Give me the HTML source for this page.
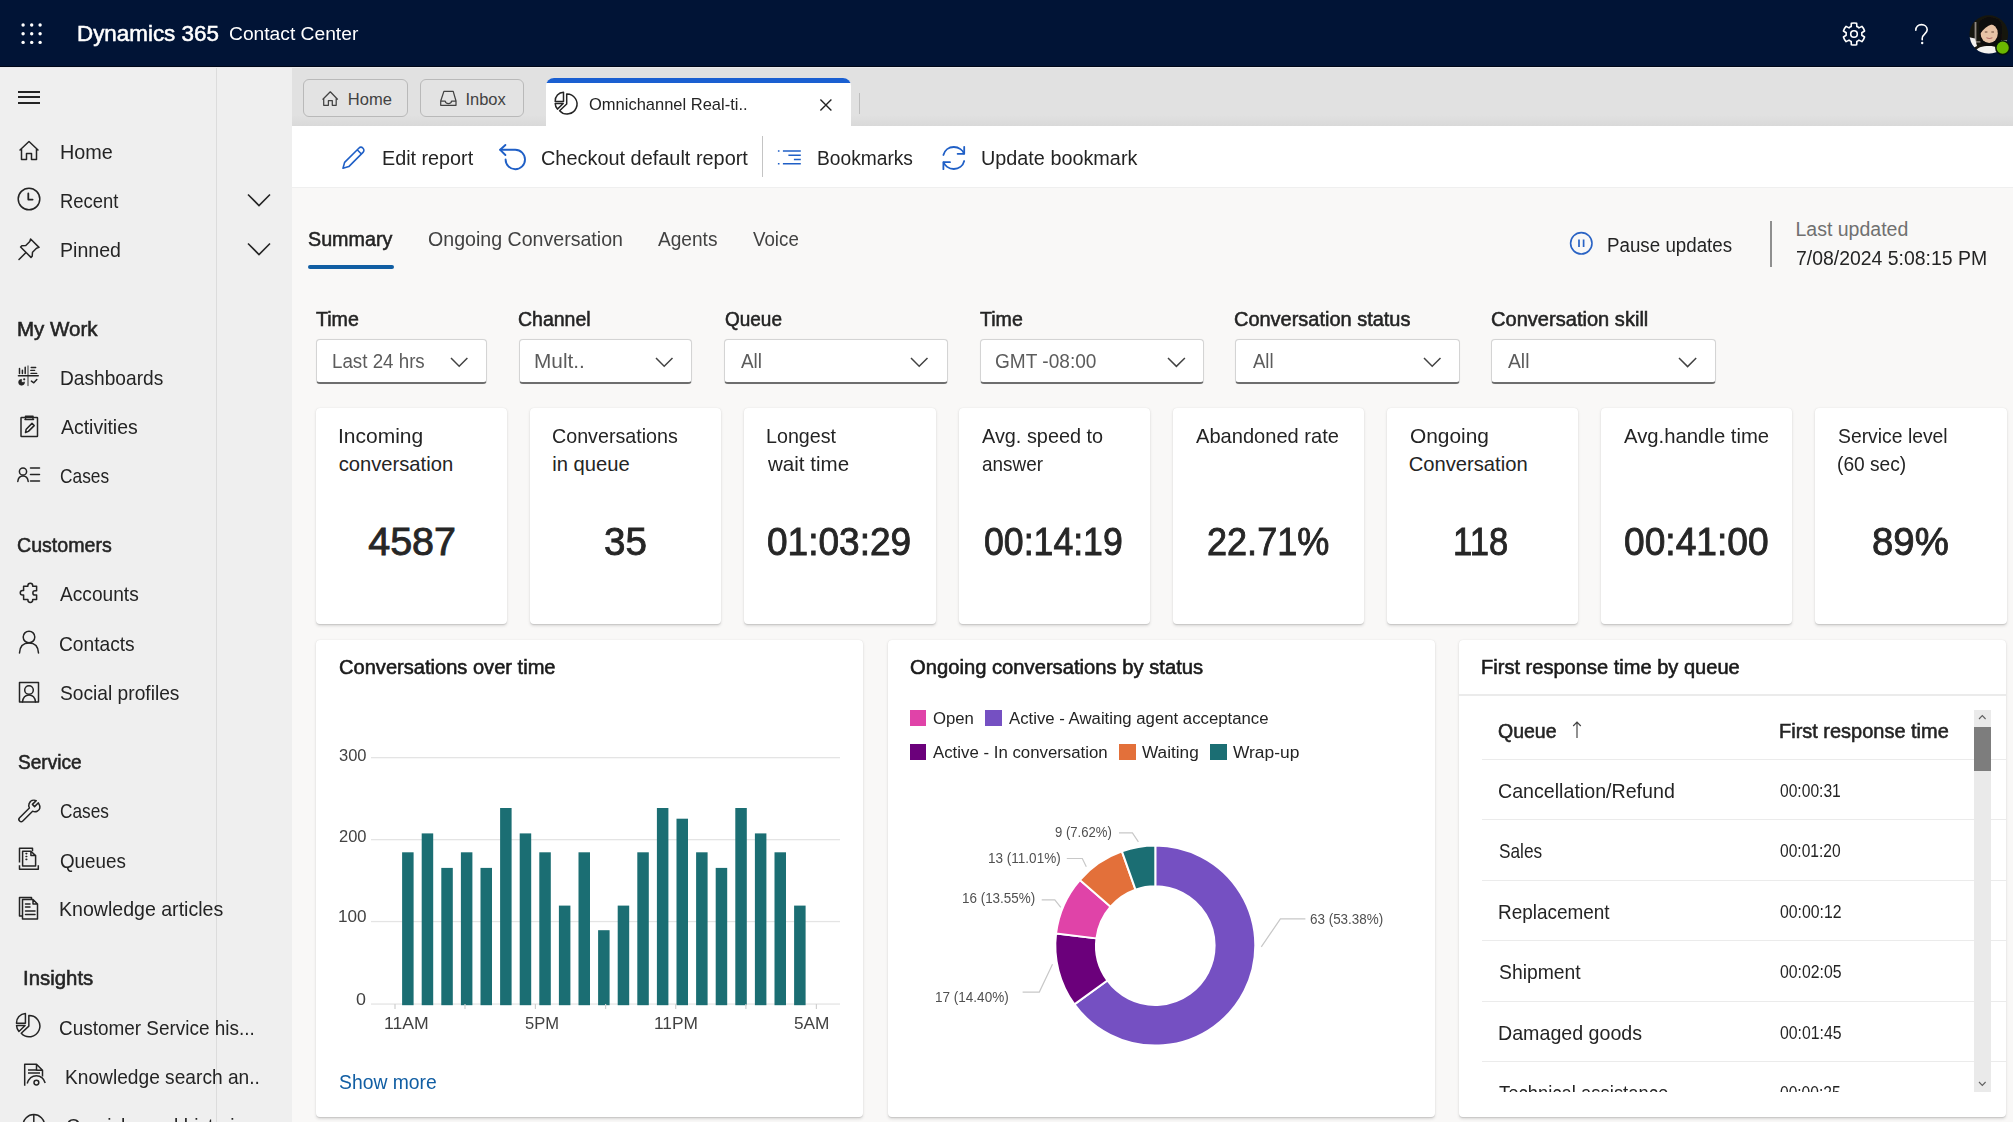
<!DOCTYPE html>
<html><head><meta charset="utf-8"><title>Omnichannel Real-time Analytics</title>
<style>
html,body{margin:0;padding:0;}
body{width:2013px;height:1122px;overflow:hidden;position:relative;background:#f9f8f7;font-family:"Liberation Sans",sans-serif;}
.t{position:absolute;white-space:nowrap;transform-origin:0 0;}
.a{position:absolute;}
svg.a{overflow:visible;}
</style></head><body>
<div class="a" style="left:0;top:0;width:2013px;height:67px;background:#011436"></div>
<div class="a" style="left:0;top:65.6px;width:2013px;height:1.4px;background:#000718"></div>
<div class="a" style="left:0;top:67px;width:292px;height:1055px;background:#efefef"></div>
<div class="a" style="left:216px;top:67px;width:1px;height:1055px;background:#dcdcdc"></div>
<div class="a" style="left:292px;top:67px;width:1721px;height:59px;background:linear-gradient(to bottom,#e1e1e1 0,#e1e1e1 48px,#d9d9d9 59px)"></div>
<div class="a" style="left:292px;top:126px;width:1721px;height:61px;background:#fff"></div>
<div class="a" style="left:292px;top:187px;width:1721px;height:1px;background:#efefef"></div>
<div class="a" style="left:0;top:67px;width:2013px;height:1px;background:#ebebed"></div>
<svg class="a" style="left:0;top:0" width="60" height="67"><circle cx="23.1" cy="25" r="1.7" fill="#fff"/><circle cx="23.1" cy="33.7" r="1.7" fill="#fff"/><circle cx="23.1" cy="42.4" r="1.7" fill="#fff"/><circle cx="31.7" cy="25" r="1.7" fill="#fff"/><circle cx="31.7" cy="33.7" r="1.7" fill="#fff"/><circle cx="31.7" cy="42.4" r="1.7" fill="#fff"/><circle cx="40.1" cy="25" r="1.7" fill="#fff"/><circle cx="40.1" cy="33.7" r="1.7" fill="#fff"/><circle cx="40.1" cy="42.4" r="1.7" fill="#fff"/></svg>
<div class="t" style="left:76.80px;top:22.75px;font-size:22.5px;line-height:22.5px;font-weight:400;color:#fff;-webkit-text-stroke:0.55px #fff;transform:scaleX(0.9954);">Dynamics 365</div>
<div class="t" style="left:228.50px;top:24.96px;font-size:18px;line-height:18px;font-weight:400;color:#fff;transform:scaleX(1.0680);">Contact Center</div>
<svg class="a" style="left:1837.6px;top:17.6px" width="32" height="32" viewBox="0 0 32 32"><path d="M13.17,8.62 L13.34,5.33 A11.0,11.0 0 0 1 18.66,5.33 L18.83,8.62 A7.9,7.9 0 0 1 20.97,9.86 L23.91,8.36 A11.0,11.0 0 0 1 26.57,12.97 L23.80,14.76 A7.9,7.9 0 0 1 23.80,17.24 L26.57,19.03 A11.0,11.0 0 0 1 23.91,23.64 L20.97,22.14 A7.9,7.9 0 0 1 18.83,23.38 L18.66,26.67 A11.0,11.0 0 0 1 13.34,26.67 L13.17,23.38 A7.9,7.9 0 0 1 11.03,22.14 L8.09,23.64 A11.0,11.0 0 0 1 5.43,19.03 L8.20,17.24 A7.9,7.9 0 0 1 8.20,14.76 L5.43,12.97 A11.0,11.0 0 0 1 8.09,8.36 L11.03,9.86 A7.9,7.9 0 0 1 13.17,8.62 Z" fill="none" stroke="#fff" stroke-width="1.6" stroke-linejoin="round"/><circle cx="16" cy="16" r="3.3" fill="none" stroke="#fff" stroke-width="1.6"/></svg>
<svg class="a" style="left:1908px;top:20px" width="28" height="28" viewBox="0 0 28 28">
<path d="M7.8 10.2 C7.8 6.6 10.4 4.6 13.5 4.6 C16.6 4.6 19.2 6.6 19.2 9.8 C19.2 13.6 14.2 14.2 14.2 18.4 L14.2 19.8" fill="none" stroke="#fff" stroke-width="1.6" stroke-linecap="round"/>
<circle cx="14.2" cy="23" r="1.2" fill="#fff"/></svg>
<svg class="a" style="left:1966px;top:13px" width="47" height="47" viewBox="0 0 47 47">
<defs><clipPath id="av"><circle cx="22.8" cy="21.5" r="19.3"/></clipPath>
<filter id="avb" x="-10%" y="-10%" width="120%" height="120%"><feGaussianBlur stdDeviation="0.55"/></filter></defs>
<g clip-path="url(#av)"><g filter="url(#avb)">
<rect x="0" y="0" width="47" height="47" fill="#161311"/>
<rect x="8.6" y="9" width="1.8" height="21" fill="#8f897f"/>
<rect x="8" y="28.3" width="8" height="1.2" fill="#9a948a"/>
<path d="M2 24 L9 25.5 L11 33 L5 36 Z" fill="#f2f0ee"/>
<path d="M33 27.5 C37 26.5 41 27 44 29 L44 33 L34 31 Z" fill="#e9e7e4"/>
<path d="M13 14 C13 7 18 4.6 24 4.6 C31 4.6 35.6 8 35.6 15 L35 30 C32 32 28 33 24 33 C19 33 16 32 14.5 30 Z" fill="#0c0a09"/>
<ellipse cx="23.2" cy="20.4" rx="8.6" ry="9.6" fill="#e7c3a6"/>
<path d="M14 21 C14 12 18 8 23.5 8 C28.5 8 32 11 32.5 16 C31 13 28 11.5 25.5 11.5 C21.5 12.5 17.5 16 14 21 Z" fill="#0c0a09"/>
<path d="M18.8 19 h2.6 M25.4 19 h2.6" stroke="#6a4a3a" stroke-width="1"/>
<path d="M20.4 24.6 Q23.4 26.4 26.4 24.6" stroke="#b7706a" stroke-width="1.1" fill="none"/>
<path d="M8 40 C11 34 16 33 23 33 C30 33 34 35 37 40 L37 47 L8 47 Z" fill="#f4f2ef"/>
<path d="M9 41.5 L36 41.5" stroke="#565c78" stroke-width="1.6"/>
</g></g>
<circle cx="36.7" cy="34.7" r="7.6" fill="#06140a"/>
<circle cx="36.7" cy="34.7" r="6.1" fill="#6bb700"/>
</svg>
<div class="a" style="left:18px;top:90.6px;width:22px;height:2px;background:#242424"></div>
<div class="a" style="left:18px;top:96.2px;width:22px;height:2px;background:#242424"></div>
<div class="a" style="left:18px;top:102px;width:22px;height:2px;background:#242424"></div>
<svg class="a" style="left:16px;top:138px" width="26" height="26" viewBox="0 0 26 26" fill="none" stroke="#242424" stroke-width="1.5" stroke-linejoin="round" stroke-linecap="round"><path d="M4 12 L13 3.5 L22 12 M5.5 10.8 V21.5 H10.5 V15.5 H15.5 V21.5 H20.5 V10.8"/></svg>
<div class="t" style="left:59.62px;top:142.02px;font-size:20.3px;line-height:20.3px;font-weight:400;color:#242424;transform:scaleX(0.9769);">Home</div>
<svg class="a" style="left:16px;top:186px" width="26" height="26" viewBox="0 0 26 26" fill="none" stroke="#242424" stroke-width="1.5" stroke-linejoin="round" stroke-linecap="round"><circle cx="13" cy="13" r="10.8"/><path d="M12.3 7.5 V13.6 H16.6" stroke-width="1.8"/></svg>
<div class="t" style="left:59.69px;top:190.82px;font-size:20.3px;line-height:20.3px;font-weight:400;color:#242424;transform:scaleX(0.9069);">Recent</div>
<svg class="a" style="left:16px;top:236px" width="26" height="26" viewBox="0 0 26 26" fill="none" stroke="#242424" stroke-width="1.5" stroke-linejoin="round" stroke-linecap="round"><path d="M3 23.5 L9.5 17 M14.6 3 L23 11.4 L20.5 12.2 L16.5 16.2 L16.2 20.2 L15 21.4 L4.6 11 L5.8 9.8 L9.8 9.5 L13.8 5.5 Z"/></svg>
<div class="t" style="left:59.64px;top:239.82px;font-size:20.3px;line-height:20.3px;font-weight:400;color:#242424;transform:scaleX(0.9643);">Pinned</div>
<svg class="a" style="left:245px;top:189.5px" width="28" height="20" viewBox="0 0 28 20"><path d="M3 4.5 L14 15.5 L25 4.5" fill="none" stroke="#242424" stroke-width="1.6"/></svg>
<svg class="a" style="left:245px;top:238.5px" width="28" height="20" viewBox="0 0 28 20"><path d="M3 4.5 L14 15.5 L25 4.5" fill="none" stroke="#242424" stroke-width="1.6"/></svg>
<div class="t" style="left:17.49px;top:318.72px;font-size:20.3px;line-height:20.3px;font-weight:400;color:#242424;-webkit-text-stroke:0.55px #242424;transform:scaleX(1.0128);">My Work</div>
<svg class="a" style="left:0;top:355px" width="60" height="40" viewBox="0 355 60 40" fill="none" stroke="#242424" stroke-linecap="round"><path d="M28 366 V385.5" stroke="#6a6a6a" stroke-width="1.4"/><path d="M18.5 375.8 H38.2" stroke-width="1.6"/><path d="M19.5 368.6 V373.4 M22.4 370.2 V373.4 M25.2 367.2 V373.4" stroke-width="1.5"/><path d="M31.2 367.5 H35.7 M30.8 370.4 H34.6 M31 373.4 H36.7" stroke-width="1.4"/><path d="M21.6 382.3 V379.3 A3 3 0 1 0 24.6 382.3 Z" fill="#242424" stroke="#242424" stroke-width="0.6" stroke-linejoin="round"/><circle cx="24.2" cy="379.3" r="1.1" fill="#242424" stroke="none"/><path d="M31.4 381.1 L33.8 382.8 L36.8 379.6" stroke-width="1.5" stroke-linejoin="round"/></svg>
<div class="t" style="left:59.66px;top:368.22px;font-size:20.3px;line-height:20.3px;font-weight:400;color:#242424;transform:scaleX(0.9444);">Dashboards</div>
<svg class="a" style="left:16px;top:413px" width="26" height="26" viewBox="0 0 26 26" fill="none" stroke="#242424" stroke-width="1.5" stroke-linejoin="round" stroke-linecap="round"><rect x="5" y="4.5" width="16.5" height="19" rx="0.5"/><path d="M9.5 5.5 V3.3 H17 V5.5 M9 6.5 H17.5" /><path d="M9.5 19.5 L10.2 16.2 L16 10.4 L18.2 12.6 L12.4 18.4 Z"/></svg>
<div class="t" style="left:60.60px;top:417.02px;font-size:20.3px;line-height:20.3px;font-weight:400;color:#242424;transform:scaleX(0.9590);">Activities</div>
<svg class="a" style="left:16px;top:461px" width="26" height="26" viewBox="0 0 26 26" fill="none" stroke="#242424" stroke-width="1.5" stroke-linejoin="round" stroke-linecap="round"><circle cx="7" cy="10.5" r="3.6"/><path d="M1.8 20.5 C2.2 16.5 4.4 15 7 15 C9.6 15 11.8 16.5 12.2 20.5 M14.5 7 H23.5 M14.5 13.5 H23.5 M14.5 20 H23.5"/></svg>
<div class="t" style="left:59.75px;top:466.22px;font-size:20.3px;line-height:20.3px;font-weight:400;color:#242424;transform:scaleX(0.8537);">Cases</div>
<div class="t" style="left:17.23px;top:535.42px;font-size:20.3px;line-height:20.3px;font-weight:400;color:#242424;-webkit-text-stroke:0.55px #242424;transform:scaleX(0.9659);">Customers</div>
<svg class="a" style="left:0;top:570px" width="60" height="40" viewBox="0 570 60 40" fill="none" stroke="#242424" stroke-width="1.5" stroke-linejoin="round"><path d="M23.6 586.3 H27.9 V585.6 A2.4 2.4 0 0 1 32.7 585.6 V586.3 H36.6 V590.8 H35 A2.15 2.15 0 0 0 35 595.1 H36.6 V599.4 H32.7 V600.1 A2.4 2.4 0 0 1 27.9 600.1 V599.4 H23.6 V595.1 H22.5 A2.25 2.25 0 0 1 22.5 590.6 H23.6 Z"/></svg>
<div class="t" style="left:60.40px;top:584.32px;font-size:20.3px;line-height:20.3px;font-weight:400;color:#242424;transform:scaleX(0.9438);">Accounts</div>
<svg class="a" style="left:16px;top:629px" width="26" height="26" viewBox="0 0 26 26" fill="none" stroke="#242424" stroke-width="1.5" stroke-linejoin="round" stroke-linecap="round"><circle cx="13" cy="8" r="5.8"/><path d="M3.5 24 C3.8 17 8 14 13 14 C18 14 22.2 17 22.5 24"/></svg>
<div class="t" style="left:59.45px;top:633.82px;font-size:20.3px;line-height:20.3px;font-weight:400;color:#242424;transform:scaleX(0.9456);">Contacts</div>
<svg class="a" style="left:16px;top:679px" width="26" height="26" viewBox="0 0 26 26" fill="none" stroke="#242424" stroke-width="1.5" stroke-linejoin="round" stroke-linecap="round"><path d="M3.5 3.5 H22.5 V23 H3.5 Z"/><circle cx="13" cy="11" r="4.3"/><path d="M6.5 23 C7 18.5 9.5 16 13 16 C16.5 16 19 18.5 19.5 23"/></svg>
<div class="t" style="left:60.40px;top:683.32px;font-size:20.3px;line-height:20.3px;font-weight:400;color:#242424;transform:scaleX(0.9460);">Social profiles</div>
<div class="t" style="left:18.20px;top:751.52px;font-size:20.3px;line-height:20.3px;font-weight:400;color:#242424;-webkit-text-stroke:0.55px #242424;transform:scaleX(0.9414);">Service</div>
<svg class="a" style="left:16px;top:797px" width="26" height="26" viewBox="0 0 26 26" fill="none" stroke="#242424" stroke-width="1.5" stroke-linejoin="round" stroke-linecap="round"><path d="M22.4 5.8 L18.6 9.6 L16.4 7.4 L20.2 3.6 C17.4 2.6 14.3 3.6 13.2 6.4 C12.5 8 12.7 9.7 13.4 11 L3.6 20.8 C2.7 21.7 2.7 23.1 3.6 24 C4.5 24.9 5.9 24.9 6.8 24 L16.6 14.2 C18 14.9 19.6 15 21.2 14.3 C24 13.2 25 10 22.4 5.8 Z"/></svg>
<div class="t" style="left:59.55px;top:800.82px;font-size:20.3px;line-height:20.3px;font-weight:400;color:#242424;transform:scaleX(0.8501);">Cases</div>
<svg class="a" style="left:12px;top:840px" width="36" height="36" viewBox="0 0 36 36" fill="none" stroke="#242424" stroke-width="1.5" stroke-linejoin="round"><path d="M7.5 22.4 V8.3 H20.5 V11.2"/><path d="M10.6 26 V11.2 H18.9 L23.6 15.6 V26 Z M18.9 11.2 V15.6 H23.6"/><path d="M7.5 25.3 V29.3 H26.3 V25.3"/><path d="M14.1 13.6 h0.6 M14.1 16.5 h0.6 M14.1 19.4 h0.6" stroke-width="1.6" stroke-linecap="round"/></svg>
<div class="t" style="left:59.70px;top:850.72px;font-size:20.3px;line-height:20.3px;font-weight:400;color:#242424;transform:scaleX(0.9267);">Queues</div>
<svg class="a" style="left:16px;top:895px" width="26" height="26" viewBox="0 0 26 26" fill="none" stroke="#242424" stroke-width="1.5" stroke-linejoin="round" stroke-linecap="round"><path d="M5.5 21 H3.5 V2.5 H15.5 V4.5 M6.5 4.5 H17 L21.5 9 V24 H6.5 Z M17 4.5 V9 H21.5 M9.5 9 H14 M9.5 12 H14 M9.5 16 H19 M9.5 19.5 H19"/></svg>
<div class="t" style="left:58.74px;top:899.12px;font-size:20.3px;line-height:20.3px;font-weight:400;color:#242424;transform:scaleX(0.9646);">Knowledge articles</div>
<div class="t" style="left:22.69px;top:967.82px;font-size:20.3px;line-height:20.3px;font-weight:400;color:#242424;-webkit-text-stroke:0.55px #242424;transform:scaleX(1.0050);">Insights</div>
<svg class="a" style="left:11.4px;top:1009.2px" width="34.2" height="32.1" viewBox="0 0 32 30" fill="none" stroke="#242424" stroke-width="1.4" stroke-linejoin="round"><path d="M16.7 6 V16 L9.6 22.7 A10 10 0 1 0 16.7 6 Z"/><path d="M13.5 4.3 V13.4 H5.2 A8.6 8.6 0 0 1 13.5 4.3 Z"/><path d="M5.2 15.5 H13.2 L7.4 21.1 A9 9 0 0 1 5.2 15.5 Z"/></svg>
<div class="t" style="left:58.77px;top:1018.02px;font-size:20.3px;line-height:20.3px;font-weight:400;color:#242424;transform:scaleX(0.9333);">Customer Service his...</div>
<svg class="a" style="left:0;top:1040px" width="60" height="60" viewBox="0 1040 60 60" fill="none" stroke="#242424" stroke-width="1.5" stroke-linejoin="round"><path d="M24.7 1085.7 V1064.3 H36.5 L42.5 1070.3 V1076.5 M36.5 1064.3 V1070.3 H42.5"/><path d="M28 1070 H36 M28 1073 H40" stroke-width="1.3"/><path d="M27.2 1083.5 C29 1078 33 1075.8 36.4 1075.8 C39.8 1075.8 43.6 1078 45.2 1083"/><circle cx="36.4" cy="1082.6" r="2.4"/></svg>
<div class="t" style="left:64.96px;top:1066.52px;font-size:20.3px;line-height:20.3px;font-weight:400;color:#242424;transform:scaleX(0.9446);">Knowledge search an..</div>
<svg class="a" style="left:0;top:1100px" width="60" height="40" viewBox="0 1100 60 40" fill="none" stroke="#242424" stroke-width="1.5"><circle cx="33.8" cy="1125.3" r="10.7"/><path d="M33.8 1114.6 V1125.3"/></svg>
<div class="t" style="left:65.90px;top:1115.82px;font-size:20.3px;line-height:20.3px;font-weight:400;color:#242424;transform:scaleX(0.9402);">Omnichannel historic...</div>
<div class="a" style="left:303.4px;top:79px;width:102.6px;height:36.3px;border:1.2px solid #b9b9b9;border-radius:6px;background:#e3e3e3"></div>
<div class="a" style="left:419.8px;top:79px;width:102.6px;height:36.3px;border:1.2px solid #b9b9b9;border-radius:6px;background:#e3e3e3"></div>
<svg class="a" style="left:318px;top:86px" width="26" height="26" viewBox="0 0 26 26" fill="none" stroke="#424242" stroke-width="1.25" stroke-linejoin="round" stroke-linecap="round"><path d="M4.9 13.2 L12.3 5.8 L19.5 13.2 M5.7 12.4 V19.3 H10.4 V14.5 H14.3 V19.3 H18.2 V12.4"/></svg>
<div class="t" style="left:347.80px;top:90.63px;font-size:16.5px;line-height:16.5px;font-weight:400;color:#424242;">Home</div>
<svg class="a" style="left:436px;top:86px" width="26" height="26" viewBox="0 0 26 26" fill="none" stroke="#424242" stroke-width="1.25" stroke-linejoin="round"><path d="M7.9 5.4 H17.2 L20 15 V19.3 H4.7 V15 Z M4.7 15 H9.2 C9.4 16.6 10.6 17.6 12.4 17.6 C14.2 17.6 15.4 16.6 15.6 15 H20"/></svg>
<div class="t" style="left:465.40px;top:90.63px;font-size:16.5px;line-height:16.5px;font-weight:400;color:#424242;">Inbox</div>
<div class="a" style="left:545.8px;top:78.4px;width:305.2px;height:48px;background:#fff;border-radius:8px 8px 0 0;overflow:hidden"><div style="position:absolute;left:0;top:0;width:100%;height:5px;background:#1a5fd1"></div></div>
<svg class="a" style="left:550px;top:88px" width="32" height="30" viewBox="0 0 32 30" fill="none" stroke="#242424" stroke-width="1.5" stroke-linejoin="round"><path d="M16.7 6 V16 L9.6 22.7 A10 10 0 1 0 16.7 6 Z"/><path d="M13.5 4.3 V13.4 H5.2 A8.6 8.6 0 0 1 13.5 4.3 Z"/><path d="M5.2 15.5 H13.2 L7.4 21.1 A9 9 0 0 1 5.2 15.5 Z"/></svg>
<div class="t" style="left:589.00px;top:96.75px;font-size:16.6px;line-height:16.6px;font-weight:400;color:#242424;transform:scaleX(0.9941);">Omnichannel Real-ti..</div>
<svg class="a" style="left:818px;top:96.5px" width="16" height="16" viewBox="0 0 16 16"><path d="M2.4 2.6 L13.4 13.4 M13.4 2.6 L2.4 13.4" stroke="#242424" stroke-width="1.4"/></svg>
<div class="a" style="left:859.2px;top:93px;width:1.2px;height:21px;background:#bdbdbd"></div>
<svg class="a" style="left:340px;top:143px" width="28" height="28" viewBox="0 0 28 28" fill="none" stroke="#1f5fc6" stroke-width="1.6" stroke-linejoin="round"><path d="M3 25.3 L4.6 19.4 L18.8 5.2 C20 4 21.8 4 23 5.2 C24.2 6.4 24.2 8.2 23 9.4 L8.8 23.6 Z M17.2 6.8 L21.4 11"/></svg>
<div class="t" style="left:381.81px;top:148.27px;font-size:20px;line-height:20px;font-weight:400;color:#242424;transform:scaleX(0.9879);">Edit report</div>
<svg class="a" style="left:495px;top:140px" width="40" height="35" viewBox="0 0 40 35" fill="none" stroke="#1f5fc6" stroke-width="1.9" stroke-linecap="round" stroke-linejoin="round"><path d="M5.2 9.8 H20.3 A9.7 9.7 0 1 1 10.6 19.5"/><path d="M10.4 5 L5.2 9.8 L10.4 15"/></svg>
<div class="t" style="left:540.71px;top:148.27px;font-size:20px;line-height:20px;font-weight:400;color:#242424;transform:scaleX(0.9950);">Checkout default report</div>
<div class="a" style="left:761.6px;top:136.4px;width:1.3px;height:40.6px;background:#c4c4c4"></div>
<svg class="a" style="left:772px;top:140px" width="34" height="35" viewBox="0 0 34 35" fill="none" stroke="#1f5fc6" stroke-width="1.5"><path d="M10.9 10.9 H28.8 M16.4 15.3 H28.8 M21.9 19.5 H28.8 M10.9 23.8 H28.8"/><path d="M5.9 10.9 H7.5 M5.9 23.8 H7.5"/></svg>
<div class="t" style="left:817.04px;top:148.27px;font-size:20px;line-height:20px;font-weight:400;color:#242424;transform:scaleX(0.9593);">Bookmarks</div>
<svg class="a" style="left:938px;top:142px" width="32" height="32" viewBox="0 0 32 32" fill="none" stroke="#1f5fc6" stroke-width="1.8" stroke-linecap="round" stroke-linejoin="round"><path d="M5.4 13 C6.6 8.1 10.8 5 15.8 5 C21 5 25 8.5 25.9 11.6"/><path d="M26.2 4.8 V11.8 H19.6"/><path d="M26.2 19 C25 23.9 20.8 27 15.8 27 C10.6 27 6.6 23.5 5.7 20.4"/><path d="M5.4 27.2 V20.2 H12"/></svg>
<div class="t" style="left:981.31px;top:148.27px;font-size:20px;line-height:20px;font-weight:400;color:#242424;transform:scaleX(0.9907);">Update bookmark</div>
<div class="t" style="left:307.80px;top:229.06px;font-size:20.6px;line-height:20.6px;font-weight:400;color:#242424;-webkit-text-stroke:0.55px #242424;transform:scaleX(0.9571);">Summary</div>
<div class="a" style="left:307.8px;top:264.6px;width:86px;height:4.4px;border-radius:2.2px;background:#115ea3"></div>
<div class="t" style="left:427.90px;top:229.06px;font-size:20.6px;line-height:20.6px;font-weight:400;color:#424242;transform:scaleX(0.9512);">Ongoing Conversation</div>
<div class="t" style="left:658.30px;top:229.06px;font-size:20.6px;line-height:20.6px;font-weight:400;color:#424242;transform:scaleX(0.9276);">Agents</div>
<div class="t" style="left:752.60px;top:229.06px;font-size:20.6px;line-height:20.6px;font-weight:400;color:#424242;transform:scaleX(0.9094);">Voice</div>
<svg class="a" style="left:1568px;top:230px" width="27" height="27" viewBox="0 0 27 27" fill="none" stroke="#2a63c4" stroke-width="1.6"><circle cx="13.3" cy="13.3" r="10.7"/><path d="M11 9.5 V17 M15.6 9.5 V17" stroke-width="1.7"/></svg>
<div class="t" style="left:1606.56px;top:234.77px;font-size:20px;line-height:20px;font-weight:400;color:#242424;transform:scaleX(0.9378);">Pause updates</div>
<div class="a" style="left:1770px;top:220.7px;width:1.8px;height:46px;background:#8f8f8f"></div>
<div class="t" style="left:1795.50px;top:219.89px;font-size:19.5px;line-height:19.5px;font-weight:400;color:#707070;">Last updated</div>
<div class="t" style="left:1795.50px;top:249.09px;font-size:19.5px;line-height:19.5px;font-weight:400;color:#242424;transform:scaleX(0.9960);">7/08/2024 5:08:15 PM</div>
<div class="t" style="left:316.40px;top:308.92px;font-size:20.3px;line-height:20.3px;font-weight:400;color:#242424;-webkit-text-stroke:0.55px #242424;transform:scaleX(0.9674);">Time</div>
<div class="a" style="left:316.1px;top:339.3px;width:168.6px;height:42px;background:#fff;border:1px solid #d4d4d4;border-bottom:2px solid #6e6e6e;border-radius:4px;box-sizing:content-box;box-shadow:0 0 1px rgba(0,0,0,0.08)"></div>
<div class="t" style="left:331.86px;top:350.87px;font-size:20px;line-height:20px;font-weight:400;color:#5c5c5c;transform:scaleX(0.9373);">Last 24 hrs</div>
<svg class="a" style="left:448.8px;top:354px" width="20.4" height="16" viewBox="0 0 20.4 16"><path d="M2 4 L10.2 12.2 L18.4 4" fill="none" stroke="#424242" stroke-width="1.5"/></svg>
<div class="t" style="left:518.04px;top:308.92px;font-size:20.3px;line-height:20.3px;font-weight:400;color:#242424;-webkit-text-stroke:0.55px #242424;transform:scaleX(0.9616);">Channel</div>
<div class="a" style="left:518.7px;top:339.3px;width:170.9px;height:42px;background:#fff;border:1px solid #d4d4d4;border-bottom:2px solid #6e6e6e;border-radius:4px;box-sizing:content-box;box-shadow:0 0 1px rgba(0,0,0,0.08)"></div>
<div class="t" style="left:534.36px;top:350.87px;font-size:20px;line-height:20px;font-weight:400;color:#5c5c5c;transform:scaleX(1.0401);">Mult..</div>
<svg class="a" style="left:653.5px;top:354px" width="20.5" height="16" viewBox="0 0 20.5 16"><path d="M2 4 L10.2 12.2 L18.5 4" fill="none" stroke="#424242" stroke-width="1.5"/></svg>
<div class="t" style="left:724.60px;top:308.92px;font-size:20.3px;line-height:20.3px;font-weight:400;color:#242424;-webkit-text-stroke:0.55px #242424;transform:scaleX(0.9354);">Queue</div>
<div class="a" style="left:724.3px;top:339.3px;width:221.7px;height:42px;background:#fff;border:1px solid #d4d4d4;border-bottom:2px solid #6e6e6e;border-radius:4px;box-sizing:content-box;box-shadow:0 0 1px rgba(0,0,0,0.08)"></div>
<div class="t" style="left:741.00px;top:350.87px;font-size:20px;line-height:20px;font-weight:400;color:#5c5c5c;transform:scaleX(0.9457);">All</div>
<svg class="a" style="left:909px;top:354px" width="20.5" height="16" viewBox="0 0 20.5 16"><path d="M2 4 L10.2 12.2 L18.5 4" fill="none" stroke="#424242" stroke-width="1.5"/></svg>
<div class="t" style="left:979.90px;top:308.92px;font-size:20.3px;line-height:20.3px;font-weight:400;color:#242424;-webkit-text-stroke:0.55px #242424;transform:scaleX(0.9651);">Time</div>
<div class="a" style="left:979.6px;top:339.3px;width:222.2px;height:42px;background:#fff;border:1px solid #d4d4d4;border-bottom:2px solid #6e6e6e;border-radius:4px;box-sizing:content-box;box-shadow:0 0 1px rgba(0,0,0,0.08)"></div>
<div class="t" style="left:995.35px;top:350.87px;font-size:20px;line-height:20px;font-weight:400;color:#5c5c5c;transform:scaleX(0.9538);">GMT -08:00</div>
<svg class="a" style="left:1165.7px;top:354px" width="20.9" height="16" viewBox="0 0 20.9 16"><path d="M2 4 L10.4 12.4 L18.9 4" fill="none" stroke="#424242" stroke-width="1.5"/></svg>
<div class="t" style="left:1234.42px;top:308.92px;font-size:20.3px;line-height:20.3px;font-weight:400;color:#242424;-webkit-text-stroke:0.55px #242424;transform:scaleX(0.9843);">Conversation status</div>
<div class="a" style="left:1235.1px;top:339.3px;width:222.6px;height:42px;background:#fff;border:1px solid #d4d4d4;border-bottom:2px solid #6e6e6e;border-radius:4px;box-sizing:content-box;box-shadow:0 0 1px rgba(0,0,0,0.08)"></div>
<div class="t" style="left:1252.70px;top:350.87px;font-size:20px;line-height:20px;font-weight:400;color:#5c5c5c;transform:scaleX(0.9273);">All</div>
<svg class="a" style="left:1422px;top:354px" width="20.5" height="16" viewBox="0 0 20.5 16"><path d="M2 4 L10.2 12.2 L18.5 4" fill="none" stroke="#424242" stroke-width="1.5"/></svg>
<div class="t" style="left:1490.71px;top:308.92px;font-size:20.3px;line-height:20.3px;font-weight:400;color:#242424;-webkit-text-stroke:0.55px #242424;transform:scaleX(0.9897);">Conversation skill</div>
<div class="a" style="left:1491.4px;top:339.3px;width:222.6px;height:42px;background:#fff;border:1px solid #d4d4d4;border-bottom:2px solid #6e6e6e;border-radius:4px;box-sizing:content-box;box-shadow:0 0 1px rgba(0,0,0,0.08)"></div>
<div class="t" style="left:1508.20px;top:350.87px;font-size:20px;line-height:20px;font-weight:400;color:#5c5c5c;transform:scaleX(0.9640);">All</div>
<svg class="a" style="left:1677.2px;top:354px" width="21.2" height="16" viewBox="0 0 21.2 16"><path d="M2 4 L10.6 12.6 L19.2 4" fill="none" stroke="#424242" stroke-width="1.5"/></svg>
<div class="a" style="left:315.7px;top:407.5px;width:191.3px;height:216px;background:#fff;border-radius:4px;box-shadow:0 1.2px 3px rgba(0,0,0,0.12),0 0.3px 0.9px rgba(0,0,0,0.10)"></div>
<div class="t" style="left:337.66px;top:426.30px;font-size:20.2px;line-height:20.2px;font-weight:400;color:#242424;transform:scaleX(1.0403);">Incoming</div>
<div class="t" style="left:338.70px;top:454.10px;font-size:20.2px;line-height:20.2px;font-weight:400;color:#242424;">conversation</div>
<div class="t" style="left:368.20px;top:522.36px;font-size:39.5px;line-height:39.5px;font-weight:400;color:#262626;-webkit-text-stroke:0.9px #262626;">4587</div>
<div class="a" style="left:530.2px;top:407.5px;width:191.3px;height:216px;background:#fff;border-radius:4px;box-shadow:0 1.2px 3px rgba(0,0,0,0.12),0 0.3px 0.9px rgba(0,0,0,0.10)"></div>
<div class="t" style="left:552.22px;top:426.30px;font-size:20.2px;line-height:20.2px;font-weight:400;color:#242424;transform:scaleX(0.9754);">Conversations</div>
<div class="t" style="left:552.20px;top:454.10px;font-size:20.2px;line-height:20.2px;font-weight:400;color:#242424;">in queue</div>
<div class="t" style="left:603.92px;top:522.36px;font-size:39.5px;line-height:39.5px;font-weight:400;color:#262626;-webkit-text-stroke:0.9px #262626;transform:scaleX(0.9769);">35</div>
<div class="a" style="left:744.3px;top:407.5px;width:191.3px;height:216px;background:#fff;border-radius:4px;box-shadow:0 1.2px 3px rgba(0,0,0,0.12),0 0.3px 0.9px rgba(0,0,0,0.10)"></div>
<div class="t" style="left:766.33px;top:426.30px;font-size:20.2px;line-height:20.2px;font-weight:400;color:#242424;transform:scaleX(0.9743);">Longest</div>
<div class="t" style="left:768.32px;top:454.10px;font-size:20.2px;line-height:20.2px;font-weight:400;color:#242424;transform:scaleX(1.0184);">wait time</div>
<div class="t" style="left:767.26px;top:522.36px;font-size:39.5px;line-height:39.5px;font-weight:400;color:#262626;-webkit-text-stroke:0.9px #262626;transform:scaleX(0.9375);">01:03:29</div>
<div class="a" style="left:958.7px;top:407.5px;width:191.3px;height:216px;background:#fff;border-radius:4px;box-shadow:0 1.2px 3px rgba(0,0,0,0.12),0 0.3px 0.9px rgba(0,0,0,0.10)"></div>
<div class="t" style="left:981.70px;top:426.30px;font-size:20.2px;line-height:20.2px;font-weight:400;color:#242424;transform:scaleX(0.9841);">Avg. speed to</div>
<div class="t" style="left:981.70px;top:454.10px;font-size:20.2px;line-height:20.2px;font-weight:400;color:#242424;transform:scaleX(0.9364);">answer</div>
<div class="t" style="left:984.40px;top:522.36px;font-size:39.5px;line-height:39.5px;font-weight:400;color:#262626;-webkit-text-stroke:0.9px #262626;transform:scaleX(0.9026);">00:14:19</div>
<div class="a" style="left:1173px;top:407.5px;width:191.3px;height:216px;background:#fff;border-radius:4px;box-shadow:0 1.2px 3px rgba(0,0,0,0.12),0 0.3px 0.9px rgba(0,0,0,0.10)"></div>
<div class="t" style="left:1196.00px;top:426.30px;font-size:20.2px;line-height:20.2px;font-weight:400;color:#242424;transform:scaleX(0.9948);">Abandoned rate</div>
<div class="t" style="left:1206.69px;top:522.36px;font-size:39.5px;line-height:39.5px;font-weight:400;color:#262626;-webkit-text-stroke:0.9px #262626;transform:scaleX(0.9132);">22.71%</div>
<div class="a" style="left:1386.7px;top:407.5px;width:191.3px;height:216px;background:#fff;border-radius:4px;box-shadow:0 1.2px 3px rgba(0,0,0,0.12),0 0.3px 0.9px rgba(0,0,0,0.10)"></div>
<div class="t" style="left:1409.70px;top:426.30px;font-size:20.2px;line-height:20.2px;font-weight:400;color:#242424;transform:scaleX(1.0347);">Ongoing</div>
<div class="t" style="left:1408.70px;top:454.10px;font-size:20.2px;line-height:20.2px;font-weight:400;color:#242424;">Conversation</div>
<div class="t" style="left:1453.37px;top:522.36px;font-size:39.5px;line-height:39.5px;font-weight:400;color:#262626;-webkit-text-stroke:0.9px #262626;transform:scaleX(0.8762);">118</div>
<div class="a" style="left:1601px;top:407.5px;width:191.3px;height:216px;background:#fff;border-radius:4px;box-shadow:0 1.2px 3px rgba(0,0,0,0.12),0 0.3px 0.9px rgba(0,0,0,0.10)"></div>
<div class="t" style="left:1624.00px;top:426.30px;font-size:20.2px;line-height:20.2px;font-weight:400;color:#242424;transform:scaleX(1.0051);">Avg.handle time</div>
<div class="t" style="left:1624.06px;top:522.36px;font-size:39.5px;line-height:39.5px;font-weight:400;color:#262626;-webkit-text-stroke:0.9px #262626;transform:scaleX(0.9408);">00:41:00</div>
<div class="a" style="left:1815.3px;top:407.5px;width:191.3px;height:216px;background:#fff;border-radius:4px;box-shadow:0 1.2px 3px rgba(0,0,0,0.12),0 0.3px 0.9px rgba(0,0,0,0.10)"></div>
<div class="t" style="left:1838.30px;top:426.30px;font-size:20.2px;line-height:20.2px;font-weight:400;color:#242424;transform:scaleX(0.9583);">Service level</div>
<div class="t" style="left:1837.35px;top:454.10px;font-size:20.2px;line-height:20.2px;font-weight:400;color:#242424;transform:scaleX(0.9494);">(60 sec)</div>
<div class="t" style="left:1871.83px;top:522.36px;font-size:39.5px;line-height:39.5px;font-weight:400;color:#262626;-webkit-text-stroke:0.9px #262626;transform:scaleX(0.9709);">89%</div>
<div class="a" style="left:315.8px;top:639.6px;width:547.5px;height:477.9px;background:#fff;border-radius:4px;box-shadow:0 1.2px 3px rgba(0,0,0,0.12),0 0.3px 0.9px rgba(0,0,0,0.10)"></div>
<div class="a" style="left:887.9px;top:639.6px;width:546.7px;height:477.9px;background:#fff;border-radius:4px;box-shadow:0 1.2px 3px rgba(0,0,0,0.12),0 0.3px 0.9px rgba(0,0,0,0.10)"></div>
<div class="a" style="left:1458.8px;top:639.6px;width:547.1px;height:477.9px;background:#fff;border-radius:4px;box-shadow:0 1.2px 3px rgba(0,0,0,0.12),0 0.3px 0.9px rgba(0,0,0,0.10)"></div>
<div class="t" style="left:338.50px;top:658.26px;font-size:19.3px;line-height:19.3px;font-weight:400;color:#1a1a1a;-webkit-text-stroke:0.55px #1a1a1a;transform:scaleX(1.0416);">Conversations over time</div>
<div class="t" style="left:909.80px;top:658.26px;font-size:19.3px;line-height:19.3px;font-weight:400;color:#1a1a1a;-webkit-text-stroke:0.55px #1a1a1a;transform:scaleX(1.0477);">Ongoing conversations by status</div>
<div class="t" style="left:1480.96px;top:658.26px;font-size:19.3px;line-height:19.3px;font-weight:400;color:#1a1a1a;-webkit-text-stroke:0.55px #1a1a1a;transform:scaleX(1.0405);">First response time by queue</div>
<svg class="a" style="left:0;top:0" width="2013" height="1122"><rect x="371" y="757.0" width="469" height="1.3" fill="#e4e4e4"/><rect x="371" y="839.0" width="469" height="1.3" fill="#e4e4e4"/><rect x="371" y="920.9" width="469" height="1.3" fill="#e4e4e4"/><rect x="371" y="1003.4" width="469" height="1.3" fill="#e4e4e4"/><rect x="402.10" y="852.3" width="11.5" height="152.9" fill="#1b6e73"/><rect x="421.70" y="833.4" width="11.5" height="171.8" fill="#1b6e73"/><rect x="441.30" y="867.9" width="11.5" height="137.3" fill="#1b6e73"/><rect x="460.90" y="852.3" width="11.5" height="152.9" fill="#1b6e73"/><rect x="480.50" y="867.9" width="11.5" height="137.3" fill="#1b6e73"/><rect x="500.10" y="808.0" width="11.5" height="197.2" fill="#1b6e73"/><rect x="519.70" y="833.4" width="11.5" height="171.8" fill="#1b6e73"/><rect x="539.30" y="852.3" width="11.5" height="152.9" fill="#1b6e73"/><rect x="558.90" y="905.6" width="11.5" height="99.6" fill="#1b6e73"/><rect x="578.50" y="852.3" width="11.5" height="152.9" fill="#1b6e73"/><rect x="598.10" y="930.2" width="11.5" height="75.0" fill="#1b6e73"/><rect x="617.70" y="905.6" width="11.5" height="99.6" fill="#1b6e73"/><rect x="637.30" y="852.3" width="11.5" height="152.9" fill="#1b6e73"/><rect x="656.90" y="808.0" width="11.5" height="197.2" fill="#1b6e73"/><rect x="676.50" y="818.7" width="11.5" height="186.5" fill="#1b6e73"/><rect x="696.10" y="852.3" width="11.5" height="152.9" fill="#1b6e73"/><rect x="715.70" y="867.9" width="11.5" height="137.3" fill="#1b6e73"/><rect x="735.30" y="808.0" width="11.5" height="197.2" fill="#1b6e73"/><rect x="754.90" y="833.4" width="11.5" height="171.8" fill="#1b6e73"/><rect x="774.50" y="852.3" width="11.5" height="152.9" fill="#1b6e73"/><rect x="794.10" y="905.6" width="11.5" height="99.6" fill="#1b6e73"/><rect x="394.4" y="1004" width="1.2" height="5" fill="#d0d0d0"/><rect x="464.4" y="1004" width="1.2" height="5" fill="#d0d0d0"/><rect x="534.8" y="1004" width="1.2" height="5" fill="#d0d0d0"/><rect x="605.0" y="1004" width="1.2" height="5" fill="#d0d0d0"/><rect x="675.1" y="1004" width="1.2" height="5" fill="#d0d0d0"/><rect x="745.3" y="1004" width="1.2" height="5" fill="#d0d0d0"/><rect x="815.8" y="1004" width="1.2" height="5" fill="#d0d0d0"/></svg>
<div class="t" style="left:338.60px;top:748.28px;font-size:16.8px;line-height:16.8px;font-weight:400;color:#424242;transform:scaleX(0.9832);">300</div>
<div class="t" style="left:338.60px;top:828.98px;font-size:16.8px;line-height:16.8px;font-weight:400;color:#424242;transform:scaleX(0.9832);">200</div>
<div class="t" style="left:337.58px;top:909.18px;font-size:16.8px;line-height:16.8px;font-weight:400;color:#424242;transform:scaleX(1.0200);">100</div>
<div class="t" style="left:356.20px;top:992.18px;font-size:16.8px;line-height:16.8px;font-weight:400;color:#424242;transform:scaleX(1.0667);">0</div>
<div class="t" style="left:383.56px;top:1014.61px;font-size:17px;line-height:17px;font-weight:400;color:#424242;transform:scaleX(1.0369);">11AM</div>
<div class="t" style="left:524.90px;top:1014.61px;font-size:17px;line-height:17px;font-weight:400;color:#424242;transform:scaleX(0.9736);">5PM</div>
<div class="t" style="left:653.98px;top:1014.61px;font-size:17px;line-height:17px;font-weight:400;color:#424242;transform:scaleX(1.0199);">11PM</div>
<div class="t" style="left:794.00px;top:1014.61px;font-size:17px;line-height:17px;font-weight:400;color:#424242;transform:scaleX(1.0150);">5AM</div>
<div class="t" style="left:338.50px;top:1071.65px;font-size:20.5px;line-height:20.5px;font-weight:400;color:#115ea3;transform:scaleX(0.9431);">Show more</div>
<div class="a" style="left:909.8px;top:709.7px;width:16.5px;height:16px;background:#e043a8"></div>
<div class="t" style="left:932.60px;top:710.06px;font-size:17.3px;line-height:17.3px;font-weight:400;color:#242424;transform:scaleX(0.9673);">Open</div>
<div class="a" style="left:985.2px;top:709.7px;width:16.5px;height:16px;background:#7550c2"></div>
<div class="t" style="left:1008.50px;top:710.06px;font-size:17.3px;line-height:17.3px;font-weight:400;color:#242424;transform:scaleX(0.9696);">Active - Awaiting agent acceptance</div>
<div class="a" style="left:909.8px;top:743.9px;width:16.5px;height:16px;background:#6b007b"></div>
<div class="t" style="left:932.60px;top:744.26px;font-size:17.3px;line-height:17.3px;font-weight:400;color:#242424;transform:scaleX(0.9726);">Active - In conversation</div>
<div class="a" style="left:1119px;top:743.9px;width:16.5px;height:16px;background:#e3703a"></div>
<div class="t" style="left:1141.70px;top:744.26px;font-size:17.3px;line-height:17.3px;font-weight:400;color:#242424;transform:scaleX(0.9952);">Waiting</div>
<div class="a" style="left:1210px;top:743.9px;width:16.5px;height:16px;background:#1b6e73"></div>
<div class="t" style="left:1233.00px;top:744.26px;font-size:17.3px;line-height:17.3px;font-weight:400;color:#242424;transform:scaleX(1.0055);">Wrap-up</div>
<svg class="a" style="left:0;top:0" width="2013" height="1122"><path d="M1155.30,845.60 A100,100 0 1 1 1074.40,1004.38 L1107.33,980.46 A59.3,59.3 0 1 0 1155.30,886.30 Z" fill="#7550c2" stroke="#fff" stroke-width="2"/><path d="M1074.40,1004.38 A100,100 0 0 1 1056.05,933.41 L1096.44,938.37 A59.3,59.3 0 0 0 1107.33,980.46 Z" fill="#6b007b" stroke="#fff" stroke-width="2"/><path d="M1056.05,933.41 A100,100 0 0 1 1079.83,879.99 L1110.55,906.70 A59.3,59.3 0 0 0 1096.44,938.37 Z" fill="#e043a8" stroke="#fff" stroke-width="2"/><path d="M1079.83,879.99 A100,100 0 0 1 1121.92,851.34 L1135.51,889.70 A59.3,59.3 0 0 0 1110.55,906.70 Z" fill="#e3703a" stroke="#fff" stroke-width="2"/><path d="M1121.92,851.34 A100,100 0 0 1 1155.30,845.60 L1155.30,886.30 A59.3,59.3 0 0 0 1135.51,889.70 Z" fill="#1b6e73" stroke="#fff" stroke-width="2"/><path d="M1119,832.9 H1132.4 L1138.4,841.8" fill="none" stroke="#c8c8c8" stroke-width="1.2"/><path d="M1066.8,858.5 H1082.3 L1086.3,866.8" fill="none" stroke="#c8c8c8" stroke-width="1.2"/><path d="M1041.7,899.8 H1054.8 L1060.8,907.4" fill="none" stroke="#c8c8c8" stroke-width="1.2"/><path d="M1022.6,992.1 H1039.3 L1052.5,964.2" fill="none" stroke="#c8c8c8" stroke-width="1.2"/><path d="M1261.3,946.8 L1280.4,918.9 H1305.4" fill="none" stroke="#c8c8c8" stroke-width="1.2"/></svg>
<div class="t" style="left:1055.40px;top:825.23px;font-size:14.5px;line-height:14.5px;font-weight:400;color:#505050;transform:scaleX(0.9043);">9 (7.62%)</div>
<div class="t" style="left:987.77px;top:850.73px;font-size:14.5px;line-height:14.5px;font-weight:400;color:#505050;transform:scaleX(0.9331);">13 (11.01%)</div>
<div class="t" style="left:962.37px;top:891.03px;font-size:14.5px;line-height:14.5px;font-weight:400;color:#505050;transform:scaleX(0.9266);">16 (13.55%)</div>
<div class="t" style="left:935.07px;top:990.13px;font-size:14.5px;line-height:14.5px;font-weight:400;color:#505050;transform:scaleX(0.9331);">17 (14.40%)</div>
<div class="t" style="left:1309.60px;top:912.03px;font-size:14.5px;line-height:14.5px;font-weight:400;color:#505050;transform:scaleX(0.9263);">63 (53.38%)</div>
<div class="a" style="left:1458.8px;top:694.3px;width:547px;height:1.3px;background:#ebebeb"></div>
<div class="t" style="left:1498.20px;top:721.12px;font-size:20.3px;line-height:20.3px;font-weight:400;color:#242424;-webkit-text-stroke:0.55px #242424;transform:scaleX(0.9618);">Queue</div>
<svg class="a" style="left:1568.8px;top:719px" width="16" height="22" viewBox="0 0 16 22"><path d="M8 3 V19 M4.2 7 L8 3 L11.8 7" fill="none" stroke="#424242" stroke-width="1.15"/></svg>
<div class="t" style="left:1779.02px;top:721.12px;font-size:20.3px;line-height:20.3px;font-weight:400;color:#242424;-webkit-text-stroke:0.55px #242424;transform:scaleX(0.9845);">First response time</div>
<div class="a" style="left:1458px;top:696px;width:548px;height:395.6px;overflow:hidden">
<div class="a" style="left:23.6px;top:62.7px;width:524.4px;height:1.3px;background:#ebebeb"></div>
<div class="a" style="left:23.6px;top:123.2px;width:524.4px;height:1.3px;background:#ebebeb"></div>
<div class="a" style="left:23.6px;top:183.7px;width:524.4px;height:1.3px;background:#ebebeb"></div>
<div class="a" style="left:23.6px;top:244.2px;width:524.4px;height:1.3px;background:#ebebeb"></div>
<div class="a" style="left:23.6px;top:304.7px;width:524.4px;height:1.3px;background:#ebebeb"></div>
<div class="a" style="left:23.6px;top:365.2px;width:524.4px;height:1.3px;background:#ebebeb"></div>
</div>
<div class="a" style="left:1458px;top:696px;width:548px;height:395.6px;overflow:hidden"><div style="position:absolute;left:-1458px;top:-696px;width:2013px;height:1122px">
<div class="t" style="left:1498.03px;top:780.72px;font-size:20.3px;line-height:20.3px;font-weight:400;color:#242424;transform:scaleX(0.9680);">Cancellation/Refund</div>
<div class="t" style="left:1780.10px;top:782.59px;font-size:17.5px;line-height:17.5px;font-weight:400;color:#242424;transform:scaleX(0.8919);">00:00:31</div>
<div class="t" style="left:1499.00px;top:841.22px;font-size:20.3px;line-height:20.3px;font-weight:400;color:#242424;transform:scaleX(0.8499);">Sales</div>
<div class="t" style="left:1780.10px;top:843.09px;font-size:17.5px;line-height:17.5px;font-weight:400;color:#242424;transform:scaleX(0.8905);">00:01:20</div>
<div class="t" style="left:1498.07px;top:901.72px;font-size:20.3px;line-height:20.3px;font-weight:400;color:#242424;transform:scaleX(0.9338);">Replacement</div>
<div class="t" style="left:1780.10px;top:903.59px;font-size:17.5px;line-height:17.5px;font-weight:400;color:#242424;transform:scaleX(0.9037);">00:00:12</div>
<div class="t" style="left:1499.00px;top:962.22px;font-size:20.3px;line-height:20.3px;font-weight:400;color:#242424;transform:scaleX(0.9530);">Shipment</div>
<div class="t" style="left:1780.10px;top:964.09px;font-size:17.5px;line-height:17.5px;font-weight:400;color:#242424;transform:scaleX(0.9037);">00:02:05</div>
<div class="t" style="left:1498.03px;top:1022.72px;font-size:20.3px;line-height:20.3px;font-weight:400;color:#242424;transform:scaleX(0.9682);">Damaged goods</div>
<div class="t" style="left:1780.10px;top:1024.59px;font-size:17.5px;line-height:17.5px;font-weight:400;color:#242424;transform:scaleX(0.9037);">00:01:45</div>
<div class="t" style="left:1499.00px;top:1083.22px;font-size:20.3px;line-height:20.3px;font-weight:400;color:#242424;transform:scaleX(0.9099);">Technical assistance</div>
<div class="t" style="left:1780.10px;top:1085.09px;font-size:17.5px;line-height:17.5px;font-weight:400;color:#242424;transform:scaleX(0.8889);">00:00:25</div>
</div></div>
<div class="a" style="left:1974px;top:709.8px;width:16.6px;height:381.8px;background:#eaeaea"></div>
<div class="a" style="left:1974px;top:727.3px;width:16.6px;height:44px;background:#7d7d7d"></div>
<svg class="a" style="left:1974px;top:711px" width="17" height="12" viewBox="0 0 17 12"><path d="M5 8 L8.3 4.6 L11.6 8" fill="none" stroke="#606060" stroke-width="1.1"/></svg>
<svg class="a" style="left:1974px;top:1078px" width="17" height="12" viewBox="0 0 17 12"><path d="M5 4 L8.3 7.4 L11.6 4" fill="none" stroke="#606060" stroke-width="1.1"/></svg>
</body></html>
